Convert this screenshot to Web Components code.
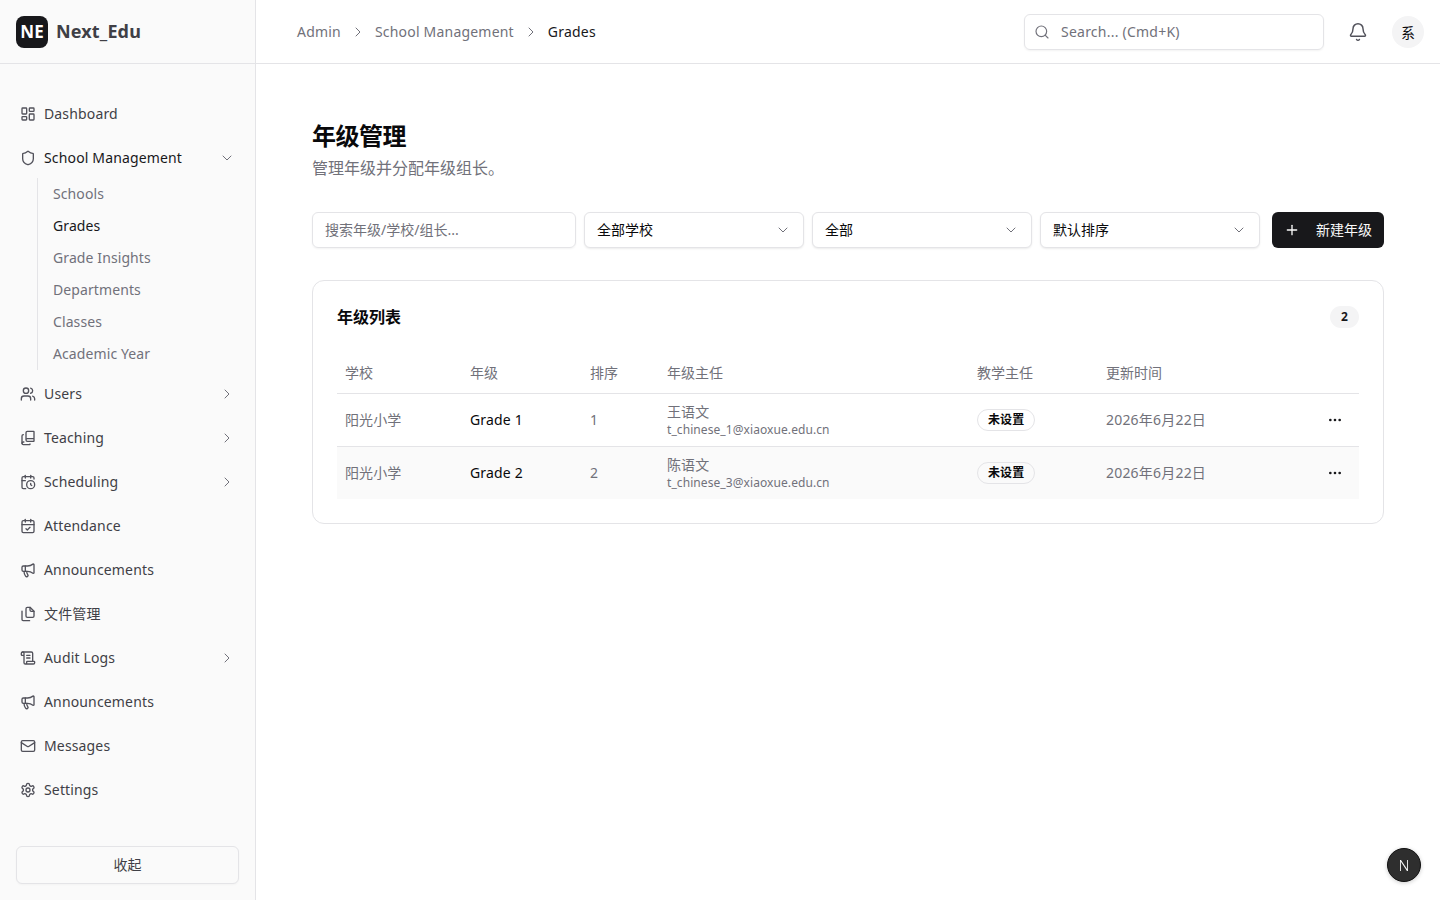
<!doctype html>
<html lang="zh">
<head>
<meta charset="utf-8">
<title>Next_Edu</title>
<style>
  html, body { margin: 0; height: 100%; background: #fff; }
  body { font-family: "Noto Sans", "Noto Sans CJK SC", sans-serif; color: #09090b; }
</style>
</head>
<body>
<edu-app></edu-app>
<script>
const icons = {
  dashboard: '<rect width="7" height="9" x="3" y="3" rx="1"/><rect width="7" height="5" x="14" y="3" rx="1"/><rect width="7" height="9" x="14" y="12" rx="1"/><rect width="7" height="5" x="3" y="16" rx="1"/>',
  shield: '<path d="M20 13c0 5-3.5 7.5-7.66 8.95a1 1 0 0 1-.67-.01C7.5 20.5 4 18 4 13V6a1 1 0 0 1 1-1c2 0 4.5-1.2 6.24-2.72a1.17 1.17 0 0 1 1.52 0C14.51 3.81 17 5 19 5a1 1 0 0 1 1 1z"/>',
  users: '<path d="M16 21v-2a4 4 0 0 0-4-4H6a4 4 0 0 0-4 4v2"/><circle cx="9" cy="7" r="4"/><path d="M22 21v-2a4 4 0 0 0-3-3.87"/><path d="M16 3.13a4 4 0 0 1 0 7.75"/>',
  teaching: '<path d="M5 7a2 2 0 0 0-2 2v11"/><path d="M5.803 18H5a2 2 0 0 0 0 4h9.5a.5.5 0 0 0 .5-.5V21"/><path d="M9 15V4a2 2 0 0 1 2-2h9.5a.5.5 0 0 1 .5.5v14a.5.5 0 0 1-.5.5H11a2 2 0 1 1 0-4h10"/>',
  scheduling: '<path d="M16 14v2.2l1.6 1"/><path d="M16 2v4"/><path d="M21 7.5V6a2 2 0 0 0-2-2H5a2 2 0 0 0-2 2v14a2 2 0 0 0 2 2h3.5"/><path d="M3 10h5"/><path d="M8 2v4"/><circle cx="16" cy="16" r="6"/>',
  attendance: '<path d="M8 2v4"/><path d="M16 2v4"/><rect width="18" height="18" x="3" y="4" rx="2"/><path d="M3 10h18"/><path d="m9 16 2 2 4-4"/>',
  megaphone: '<path d="M11 6a13 13 0 0 0 8.4-2.8A1 1 0 0 1 21 4v12a1 1 0 0 1-1.6.8A13 13 0 0 0 11 14H5a2 2 0 0 1-2-2V8a2 2 0 0 1 2-2z"/><path d="M6 14a12 12 0 0 0 2.4 7.2 2 2 0 0 0 3.2-2.4A8 8 0 0 1 10 14"/><path d="M8 6v8"/>',
  files: '<path d="M15 2h-4a2 2 0 0 0-2 2v11a2 2 0 0 0 2 2h8a2 2 0 0 0 2-2V8z"/><path d="M15 2v4a2 2 0 0 0 2 2h4"/><path d="M3 7.6v12.8A1.6 1.6 0 0 0 4.6 22h9.8"/>',
  scroll: '<path d="M15 12h-5"/><path d="M15 8h-5"/><path d="M19 17V5a2 2 0 0 0-2-2H4"/><path d="M8 21h12a2 2 0 0 0 2-2v-1a1 1 0 0 0-1-1H11a1 1 0 0 0-1 1v1a2 2 0 1 1-4 0V5a2 2 0 1 0-4 0v2a1 1 0 0 0 1 1h3"/>',
  mail: '<path d="m22 7-8.991 5.727a2 2 0 0 1-2.009 0L2 7"/><rect x="2" y="4" width="20" height="16" rx="2"/>',
  settings: '<path d="M12.22 2h-.44a2 2 0 0 0-2 2v.18a2 2 0 0 1-1 1.73l-.43.25a2 2 0 0 1-2 0l-.15-.08a2 2 0 0 0-2.73.73l-.22.38a2 2 0 0 0 .73 2.73l.15.1a2 2 0 0 1 1 1.72v.51a2 2 0 0 1-1 1.74l-.15.09a2 2 0 0 0-.73 2.73l.22.38a2 2 0 0 0 2.73.73l.15-.08a2 2 0 0 1 2 0l.43.25a2 2 0 0 1 1 1.73V20a2 2 0 0 0 2 2h.44a2 2 0 0 0 2-2v-.18a2 2 0 0 1 1-1.73l.43-.25a2 2 0 0 1 2 0l.15.08a2 2 0 0 0 2.73-.73l.22-.39a2 2 0 0 0-.73-2.73l-.15-.08a2 2 0 0 1-1-1.74v-.5a2 2 0 0 1 1-1.74l.15-.09a2 2 0 0 0 .73-2.73l-.22-.38a2 2 0 0 0-2.73-.73l-.15.08a2 2 0 0 1-2 0l-.43-.25a2 2 0 0 1-1-1.73V4a2 2 0 0 0-2-2z"/><circle cx="12" cy="12" r="3"/>',
  bell: '<path d="M10.268 21a2 2 0 0 0 3.464 0"/><path d="M3.262 15.326A1 1 0 0 0 4 17h16a1 1 0 0 0 .74-1.673C19.41 13.956 18 12.499 18 8A6 6 0 0 0 6 8c0 4.499-1.411 5.956-2.738 7.326"/>',
  search: '<path d="m21 21-4.34-4.34"/><circle cx="11" cy="11" r="8"/>',
  right: '<path d="m9 18 6-6-6-6"/>',
  down: '<path d="m6 9 6 6 6-6"/>',
  plus: '<path d="M5 12h14"/><path d="M12 5v14"/>',
  dots: '<circle cx="12" cy="12" r="1"/><circle cx="19" cy="12" r="1"/><circle cx="5" cy="12" r="1"/>'
}

function svg (name, size = 16, width = 2) {
  return `<svg xmlns="http://www.w3.org/2000/svg" width="${size}" height="${size}" viewBox="0 0 24 24" fill="none" stroke="currentColor" stroke-width="${width}" stroke-linecap="round" stroke-linejoin="round" style="display:block;flex:none">${icons[name]}</svg>`
}

class EduNavItem extends HTMLElement {
  connectedCallback () {
    if (this.shadowRoot) return
    const arrow = this.getAttribute('arrow')
    const active = this.hasAttribute('active')
    this.attachShadow({ mode: 'open' })
    this.shadowRoot.innerHTML = `
<style>
  :host { display: flex; align-items: center; height: 36px; padding: 0 4px; color: ${active ? '#18181b' : '#3f3f46'}; font-size: 14px; letter-spacing: .15px; }
  .icon { color: #52525b; margin-right: 8px; }
  .label { flex: 1; white-space: nowrap; padding-bottom: 2px; }
  .arrow { color: #71717a; }
</style>
<span class="icon">${svg(this.getAttribute('icon'))}</span>
<span class="label"><slot></slot></span>
${arrow ? `<span class="arrow">${svg(arrow, 16, 1.5)}</span>` : ''}
`
  }
}

class EduSubnav extends HTMLElement {
  connectedCallback () {
    if (this.shadowRoot) return
    this.attachShadow({ mode: 'open' })
    const items = this.getAttribute('items').split(',')
    const current = this.getAttribute('current')
    this.shadowRoot.innerHTML = `
<style>
  :host { display: block; margin: 2px 0 -2px 21px; position: relative; }
  ul { list-style: none; margin: 0; padding: 0 0 0 15px; border-left: 1px solid #e4e4e7; }
  li { height: 32px; line-height: 32px; font-size: 14px; letter-spacing: .1px; color: #71717a; }
  li.on { color: #18181b; }
</style>
<ul>${items.map(i => `<li class="${i === current ? 'on' : ''}">${i}</li>`).join('')}</ul>
`
  }
}

class EduSidebar extends HTMLElement {
  constructor () {
    super()
    this.attachShadow({ mode: 'open' })
    this.shadowRoot.innerHTML = `
<style>
  :host { display: flex; flex-direction: column; flex: none; width: 256px; box-sizing: border-box; height: 100vh; background: #fafafa; border-right: 1px solid #e4e4e7; }
  .brand { display: flex; align-items: center; gap: 8px; height: 64px; box-sizing: border-box; padding: 0 16px; border-bottom: 1px solid #e4e4e7; }
  .logo { width: 32px; height: 32px; border-radius: 8px; background: #18181b; color: #fff; font-size: 17px; font-weight: 700; display: flex; align-items: center; justify-content: center; }
  .name { font-size: 18px; font-weight: 700; color: #3f3f46; letter-spacing: .15px; padding-bottom: 2px; }
  nav { flex: 1; display: flex; flex-direction: column; gap: 8px; padding: 32px 16px 0; }
  .foot { padding: 0 16px 16px; }
  button { display: block; width: 100%; height: 38px; padding: 0 0 2px; background: #fafafa; border: 1px solid #e4e4e7; border-radius: 6px; font: inherit; font-size: 14px; color: #3f3f46; box-shadow: 0 1px 2px rgba(0,0,0,.03); }
</style>
<div class="brand"><div class="logo">NE</div><div class="name">Next_Edu</div></div>
<nav>
  <edu-nav-item icon="dashboard">Dashboard</edu-nav-item>
  <div>
    <edu-nav-item icon="shield" arrow="down" active>School Management</edu-nav-item>
    <edu-subnav items="Schools,Grades,Grade Insights,Departments,Classes,Academic Year" current="Grades"></edu-subnav>
  </div>
  <edu-nav-item icon="users" arrow="right">Users</edu-nav-item>
  <edu-nav-item icon="teaching" arrow="right">Teaching</edu-nav-item>
  <edu-nav-item icon="scheduling" arrow="right">Scheduling</edu-nav-item>
  <edu-nav-item icon="attendance">Attendance</edu-nav-item>
  <edu-nav-item icon="megaphone">Announcements</edu-nav-item>
  <edu-nav-item icon="files">文件管理</edu-nav-item>
  <edu-nav-item icon="scroll" arrow="right">Audit Logs</edu-nav-item>
  <edu-nav-item icon="megaphone">Announcements</edu-nav-item>
  <edu-nav-item icon="mail">Messages</edu-nav-item>
  <edu-nav-item icon="settings">Settings</edu-nav-item>
</nav>
<div class="foot"><button>收起</button></div>
`
  }
}

class EduTopbar extends HTMLElement {
  constructor () {
    super()
    this.attachShadow({ mode: 'open' })
    this.shadowRoot.innerHTML = `
<style>
  :host { display: flex; align-items: center; flex: none; height: 64px; box-sizing: border-box; padding: 0 16px 0 41px; border-bottom: 1px solid #e4e4e7; background: #fff; font-size: 14px; }
  .crumbs { flex: 1; display: flex; align-items: center; color: #71717a; white-space: nowrap; letter-spacing: .2px; }
  .crumbs svg { margin: 0 9px; color: #71717a; }
  .crumbs b { font-weight: 400; color: #18181b; }
  .search { display: flex; align-items: center; gap: 11px; width: 300px; height: 36px; box-sizing: border-box; padding: 0 9px; border: 1px solid #e4e4e7; border-radius: 6px; color: #71717a; box-shadow: 0 1px 2px rgba(0,0,0,.05); letter-spacing: .23px; }
  .bell { color: #52525b; margin: 0 24px 0 24px; }
  .avatar { width: 32px; height: 32px; border-radius: 50%; background: #f4f4f5; display: flex; align-items: center; justify-content: center; color: #09090b; }
</style>
<div class="crumbs"><span>Admin</span>${svg('right', 16, 1.5)}<span>School Management</span>${svg('right', 16, 1.5)}<b>Grades</b></div>
<div class="search">${svg('search', 16, 1.75)}<span>Search... (Cmd+K)</span></div>
<div class="bell">${svg('bell', 20, 1.75)}</div>
<div class="avatar">系</div>
`
  }
}

class EduSelect extends HTMLElement {
  constructor () {
    super()
    this.attachShadow({ mode: 'open' })
    this.shadowRoot.innerHTML = `
<style>
  :host { display: flex; align-items: center; justify-content: space-between; flex: none; width: 220px; height: 36px; box-sizing: border-box; padding: 0 12px; background: #fff; border: 1px solid #e4e4e7; border-radius: 6px; box-shadow: 0 1px 2px rgba(0,0,0,.08); font-size: 14px; color: #09090b; }
  .text { padding-bottom: 2px; }
  .chev { color: #71717a; }
</style>
<span class="text"><slot></slot></span><span class="chev">${svg('down', 16, 1.5)}</span>
`
  }
}

class EduFilters extends HTMLElement {
  constructor () {
    super()
    this.attachShadow({ mode: 'open' })
    this.shadowRoot.innerHTML = `
<style>
  :host { display: flex; gap: 8px; margin-top: 32px; }
  .input { flex: 1; height: 36px; box-sizing: border-box; padding: 0 12px; line-height: 34px; border: 1px solid #e4e4e7; border-radius: 6px; font-size: 14px; color: #71717a; box-shadow: 0 1px 2px rgba(0,0,0,.05); }
  .add { display: flex; align-items: center; flex: none; width: 112px; height: 36px; box-sizing: border-box; margin-left: 4px; padding-left: 12px; background: #18181b; color: #fafafa; border-radius: 6px; font-size: 14px; gap: 16px; }
  .add span { padding-bottom: 2px; }
</style>
<div class="input">搜索年级/学校/组长...</div>
<edu-select>全部学校</edu-select>
<edu-select>全部</edu-select>
<edu-select>默认排序</edu-select>
<div class="add">${svg('plus', 16, 2)}<span>新建年级</span></div>
`
  }
}

class EduGradeTable extends HTMLElement {
  constructor () {
    super()
    this.attachShadow({ mode: 'open' })
    const rows = [
      { school: '阳光小学', grade: 'Grade 1', order: 1, head: '王语文', email: 't_chinese_1@xiaoxue.edu.cn' },
      { school: '阳光小学', grade: 'Grade 2', order: 2, head: '陈语文', email: 't_chinese_3@xiaoxue.edu.cn' }
    ]
    this.shadowRoot.innerHTML = `
<style>
  :host { display: block; font-size: 14px; color: #71717a; }
  table { width: 100%; border-collapse: collapse; table-layout: fixed; }
  th { height: 38px; padding: 0 8px 2px; text-align: left; font-weight: 400; border-bottom: 1px solid #e4e4e7; }
  td { height: 50px; padding: 0 8px 2px; border-bottom: 1px solid #e4e4e7; letter-spacing: .1px; }
  tr:last-child td { border-bottom: 0; }
  tr:nth-child(2) td { background: #fafafa; }
  .grade { color: #09090b; letter-spacing: .17px; }
  .date { letter-spacing: .2px; }
  .person { padding-top: 3px; }
  .head { line-height: 18px; }
  .mail { font-size: 12px; line-height: 16px; margin-top: 1px; letter-spacing: .08px; }
  .badge { display: inline-flex; align-items: center; height: 22px; box-sizing: border-box; margin-top: 2px; padding: 0 10px 2px; border: 1px solid #e4e4e7; border-radius: 11px; font-size: 12px; font-weight: 600; color: #09090b; vertical-align: middle; }
  .more { display: flex; justify-content: flex-end; color: #18181b; padding-right: 8px; margin-top: 2px; }
</style>
<table>
  <colgroup><col style="width:125px"><col style="width:120px"><col style="width:77px"><col style="width:310px"><col style="width:129px"><col style="width:200px"><col></colgroup>
  <thead><tr><th>学校</th><th>年级</th><th>排序</th><th>年级主任</th><th>教学主任</th><th>更新时间</th><th></th></tr></thead>
  <tbody>
  ${rows.map(r => `<tr>
    <td>${r.school}</td>
    <td class="grade">${r.grade}</td>
    <td>${r.order}</td>
    <td><div class="person"><div class="head">${r.head}</div><div class="mail">${r.email}</div></div></td>
    <td><span class="badge">未设置</span></td>
    <td class="date">2026年6月22日</td>
    <td><div class="more">${svg('dots', 16, 2)}</div></td>
  </tr>`).join('')}
  </tbody>
</table>
`
  }
}

class EduCard extends HTMLElement {
  constructor () {
    super()
    this.attachShadow({ mode: 'open' })
    this.shadowRoot.innerHTML = `
<style>
  :host { display: block; margin-top: 32px; padding: 24px; background: #fff; border: 1px solid #e4e4e7; border-radius: 12px; }
  header { display: flex; align-items: center; justify-content: space-between; height: 24px; margin-bottom: 24px; }
  h2 { margin: 0; padding-bottom: 2px; font-size: 16px; font-weight: 700; color: #09090b; }
  .count { display: flex; align-items: center; justify-content: center; width: 29px; height: 22px; box-sizing: border-box; padding-bottom: 2px; border-radius: 11px; background: #f4f4f5; font-size: 12px; font-weight: 700; color: #18181b; }
</style>
<header><h2>年级列表</h2><div class="count">2</div></header>
<slot></slot>
`
  }
}

class EduDevBadge extends HTMLElement {
  constructor () {
    super()
    this.attachShadow({ mode: 'open' })
    this.shadowRoot.innerHTML = `
<style>
  :host { position: fixed; right: 19px; bottom: 18px; width: 34px; height: 34px; box-sizing: border-box; display: flex; align-items: center; justify-content: center; border-radius: 50%; background: #2e2e2e; border: 1px solid #111; box-shadow: 0 1px 4px rgba(0,0,0,.2); color: #fff; font-size: 15px; font-weight: 300; padding-bottom: 1px; }
</style>
N
`
  }
}

class EduApp extends HTMLElement {
  constructor () {
    super()
    this.attachShadow({ mode: 'open' })
    this.shadowRoot.innerHTML = `
<style>
  :host { display: flex; height: 100vh; overflow: hidden; }
  .right { flex: 1; min-width: 0; display: flex; flex-direction: column; }
  main { flex: 1; padding: 56px 56px 0; }
  h1 { margin: 0; font-size: 24px; line-height: 32px; font-weight: 700; color: #09090b; letter-spacing: -.5px; }
  p { margin: 4px 0 0; font-size: 16px; line-height: 24px; color: #71717a; }
</style>
<edu-sidebar></edu-sidebar>
<div class="right">
  <edu-topbar></edu-topbar>
  <main>
    <h1>年级管理</h1>
    <p>管理年级并分配年级组长。</p>
    <edu-filters></edu-filters>
    <edu-card><edu-grade-table></edu-grade-table></edu-card>
  </main>
</div>
<edu-dev-badge></edu-dev-badge>
`
  }
}

customElements.define('edu-nav-item', EduNavItem)
customElements.define('edu-subnav', EduSubnav)
customElements.define('edu-sidebar', EduSidebar)
customElements.define('edu-topbar', EduTopbar)
customElements.define('edu-select', EduSelect)
customElements.define('edu-filters', EduFilters)
customElements.define('edu-grade-table', EduGradeTable)
customElements.define('edu-card', EduCard)
customElements.define('edu-dev-badge', EduDevBadge)
customElements.define('edu-app', EduApp)
</script>
</body>
</html>
